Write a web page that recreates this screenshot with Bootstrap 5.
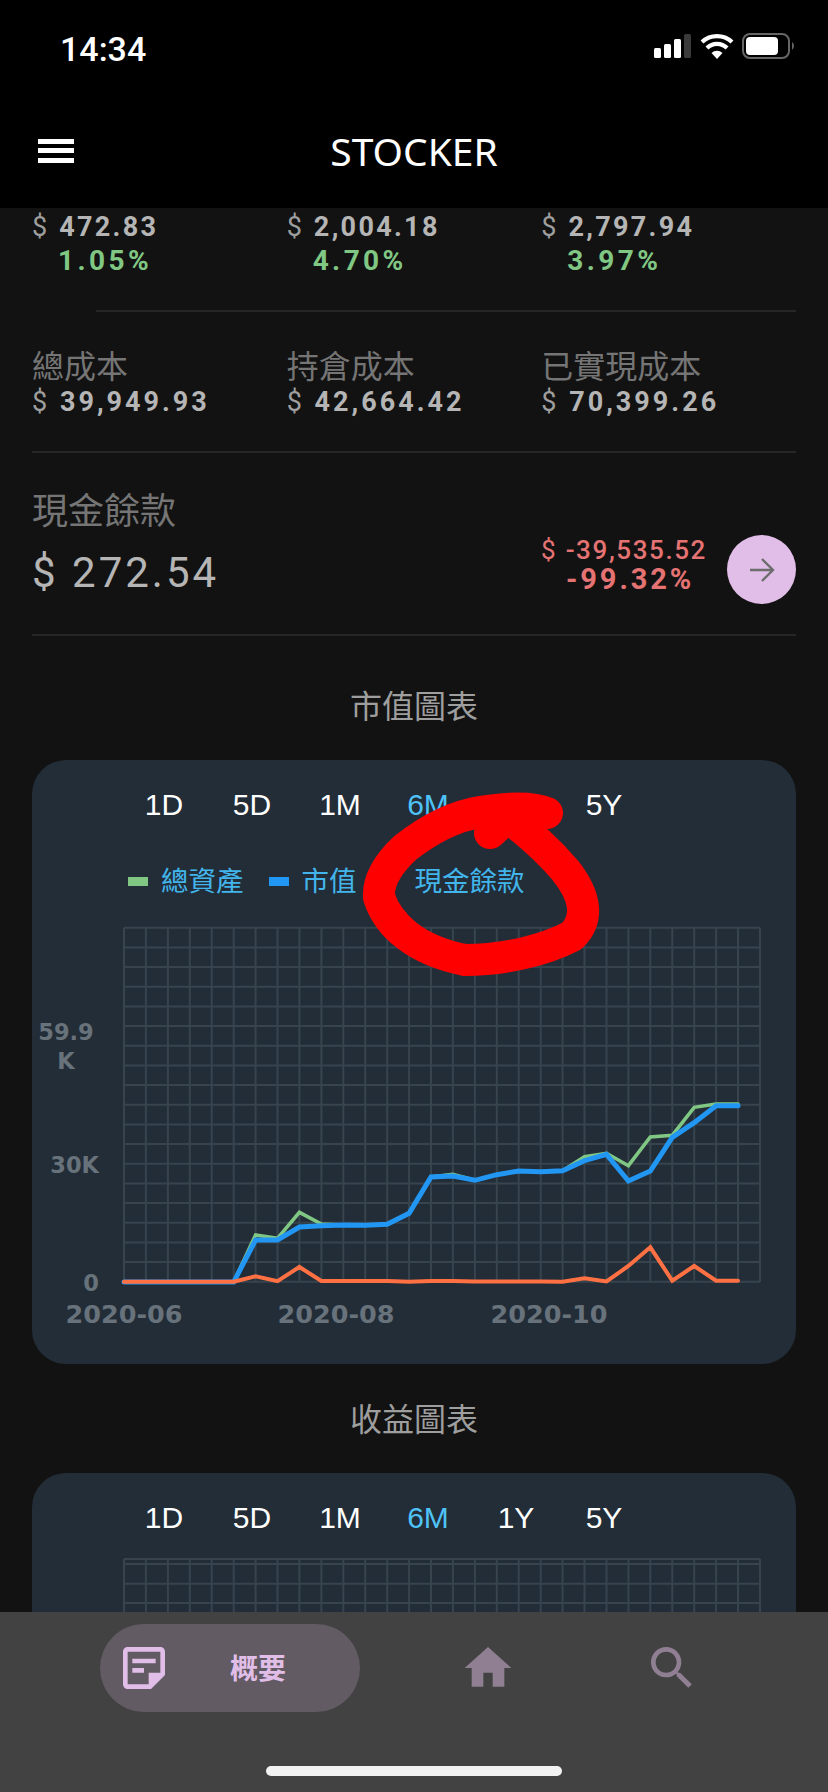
<!DOCTYPE html>
<html lang="zh-Hant">
<head>
  <meta charset="UTF-8">
  <meta name="viewport" content="width=device-width, initial-scale=1.0">
  <title>Stocker</title>
  <link rel="stylesheet" href="https://cdn.jsdelivr.net/npm/bootstrap@5.3.0/dist/css/bootstrap.min.css">
  <style>
    html, body { background: #121212; }
    body { font-family: "Liberation Sans", "Noto Sans CJK TC", sans-serif; }
    .app-frame { width: 828px; height: 1792px; overflow: hidden; }
    .top-bar { height: 208px; background: #000; color: #fff; flex: none; }
    .status-line { height: 98px; padding: 29px 33px 0 60px; }
    .clock { font: 500 34px/40px Roboto, sans-serif; }
    .title-line { height: 110px; padding: 0 0 4px 38px; }
    .burger { width: 36px; height: 24px; flex: none; border-top: 5px solid #fff; border-bottom: 5px solid #fff; position: relative; }
    .burger::after { content: ""; position: absolute; left: 0; right: 0; top: 4px; height: 5px; background: #fff; }
    .app-name { width: 100%; margin-left: -36px; padding-right: 38px; text-align: center; font: 400 39px/50px "Noto Sans", sans-serif; }
    .scroll-area { flex: 1 1 auto; overflow: hidden; padding: 2px 32px 0; background: #121212; min-height: 0; }
    .money { font: 700 27px/34px Roboto, sans-serif; letter-spacing: 3px; color: #b5b5b5; }
    .money .cur { font-weight: 400; margin-right: 3px; color: #9e9e9e; letter-spacing: 0; }
    .money-tight { letter-spacing: 2.3px; }
    .gain { font: 700 28px/34px Roboto, sans-serif; letter-spacing: 3.4px; color: #81c784; padding-left: 26px; }
    .rule { height: 2px; background: #262626; }
    .rule-short { margin: 32px 0 0 64px; }
    .cost-row { padding-top: 37px; padding-bottom: 32px; }
    .label-cjk { font-size: 32px; line-height: 36px; color: #757575; }
    .cash-row { padding-top: 38px; padding-bottom: 30px; }
    .cash-label { font-size: 36px; line-height: 42px; color: #757575; }
    .cash-value { font: 400 42px/50px Roboto, sans-serif; letter-spacing: 3px; color: #b5b5b5; margin-top: 15px; }
    .delta { color: #e57373; font-family: Roboto, sans-serif; padding-top: 44px; width: 164px; }
    .delta-amt { font-size: 26px; line-height: 30px; font-weight: 500; letter-spacing: 1.6px; white-space: nowrap; }
    .delta-amt .cur { font-weight: 400; letter-spacing: 0; margin-right: 2px; }
    .delta-pct { font-size: 29px; line-height: 29px; font-weight: 700; letter-spacing: 2.9px; padding-left: 25px; }
    .go-btn { width: 69px; height: 69px; background: #e1bee7; border: 0; margin: 44px 0 0 22px; flex: none; }
    .go-btn:hover { background: #e1bee7; }
    .chart-head { font-size: 32px; line-height: 40px; color: #9e9e9e; text-align: center; }
    .chart-box { background: #222d38; border-radius: 34px; position: relative; }
    .range-tabs { padding: 23px 0 0 88px; }
    .range-tabs span { width: 88px; text-align: center; font-size: 30px; line-height: 44px; color: #fff; }
    .range-tabs .picked { color: #4fc3f7; }
    .legend-row { padding: 35px 0 0 96px; height: 98px; font-size: 27.5px; line-height: 40px; color: #42b6ec; align-items: flex-start; }
    .legend-row i { display: block; width: 20px; height: 9px; margin: 15px 13px 0 0; }
    .legend-row i.tiny-mark { width: 14px; margin-right: 19px; }
    .legend-row span { margin-right: 25px; white-space: nowrap; }
    .plot { display: block; }
    .plot text { font: 700 22.5px "DejaVu Sans", sans-serif; fill: #68727b; }
    .plot text.tick-x { font-size: 25.5px; }
    .scribble { position: absolute; left: 0; top: 0; pointer-events: none; }
    .bottom-bar { height: 180px; flex: none; background: #424242; position: relative; padding: 12px 0 0 100px; }
    .pill { width: 260px; height: 88px; border-radius: 44px; background: #625b63; padding-left: 16px; color: #e1bee7; }
    .pill b { width: 84px; margin: 4px 0 0 44px; text-align: center; font-size: 28px; font-weight: 700; }
    .nav-spot { width: 56px; height: 56px; margin-top: 16px; }
    .home-spot { margin-left: 100px; }
    .find-spot { margin-left: 128px; }
    .home-line { position: absolute; left: 266px; bottom: 16px; width: 296px; height: 10px; border-radius: 5px; background: #f2f2f2; }
  </style>
</head>
<body>
  <div class="app-frame d-flex flex-column">
    <header class="top-bar">
      <div class="status-line d-flex justify-content-between align-items-start">
        <span class="clock">14:34</span>
        <svg width="141" height="28" viewBox="0 0 141 28" class="mt-1">
          <g fill="#fff">
            <rect x="0" y="15" width="7" height="10" rx="1.5"/>
            <rect x="10" y="11" width="7" height="14" rx="1.5"/>
            <rect x="20" y="6" width="7" height="19" rx="1.5"/>
          </g>
          <rect x="30" y="1" width="7" height="24" rx="1.5" fill="#3a3a3a"/>
          <g fill="none" stroke="#fff" stroke-width="4.2">
            <path d="M48 9a22 22 0 0 1 30 0"/>
            <path d="M53 15a14 14 0 0 1 20 0"/>
          </g>
          <path d="M57.500 20a8 8 0 0 1 11 0l-5.500 6z" fill="#fff"/>
          <rect x="89" y="1" width="46" height="24" rx="7" fill="none" stroke="#666" stroke-width="2"/>
          <rect x="92" y="4" width="32" height="18" rx="4" fill="#fff"/>
          <path d="M138 9a5 5 0 0 1 0 8z" fill="#666"/>
        </svg>
      </div>
      <div class="title-line d-flex align-items-center">
        <div class="burger"></div>
        <div class="app-name">STOCKER</div>
      </div>
    </header>

    <main class="scroll-area">
      <div class="row g-0">
        <div class="col-4"><div class="money money-tight"><span class="cur">$</span> 472.83</div><div class="gain">1.05%</div></div>
        <div class="col-4"><div class="money money-tight"><span class="cur">$</span> 2,004.18</div><div class="gain">4.70%</div></div>
        <div class="col-4"><div class="money money-tight"><span class="cur">$</span> 2,797.94</div><div class="gain">3.97%</div></div>
      </div>
      <div class="rule rule-short"></div>

      <div class="row g-0 cost-row">
        <div class="col-4"><div class="label-cjk">總成本</div><div class="money"><span class="cur">$</span> 39,949.93</div></div>
        <div class="col-4"><div class="label-cjk">持倉成本</div><div class="money"><span class="cur">$</span> 42,664.42</div></div>
        <div class="col-4"><div class="label-cjk">已實現成本</div><div class="money"><span class="cur">$</span> 70,399.26</div></div>
      </div>
      <div class="rule"></div>

      <div class="d-flex cash-row">
        <div class="flex-grow-1">
          <div class="cash-label">現金餘款</div>
          <div class="cash-value">$ 272.54</div>
        </div>
        <div class="delta">
          <div class="delta-amt"><span class="cur">$</span> -39,535.52</div>
          <div class="delta-pct">-99.32%</div>
        </div>
        <button class="btn go-btn rounded-circle d-flex align-items-center justify-content-center p-0" type="button" aria-label="more">
          <svg width="28" height="28" viewBox="0 0 28 28" fill="none" stroke="#6d6d6d" stroke-width="2.4"><path d="M2 14h23M14 3l11 11-11 11"/></svg>
        </button>
      </div>
      <div class="rule"></div>

      <h2 class="chart-head fw-normal mb-0" style="margin-top:51px">市值圖表</h2>
      <section class="chart-box" style="height:604px;margin-top:33px">
        <div class="range-tabs d-flex">
          <span>1D</span><span>5D</span><span>1M</span><span class="picked">6M</span><span>1Y</span><span>5Y</span>
        </div>
        <div class="legend-row d-flex">
          <i style="background:#81c784"></i><span>總資產</span>
          <i style="background:#2196f3"></i><span>市值</span>
          <i class="tiny-mark" style="background:#ff7043"></i><span>現金餘款</span>
        </div>
        <svg id="plotA" class="plot" width="764" height="430" viewBox="32 925 764 430"></svg>
        <svg class="scribble" width="764" height="604" viewBox="32 760 764 604" fill="none" stroke="#f00" stroke-width="32" stroke-linecap="round" stroke-linejoin="round">
          <path d="M547 813C530 806 505 808 480 812C455 816 428 830 405 848C388 864 378 880 379 897C388 925 415 950 465 960C505 960 545 950 572 936C590 918 585 895 565 870C548 850 525 830 505 815"/>
          <path d="M490 833L510 815"/>
        </svg>
      </section>

      <h2 class="chart-head fw-normal mb-0" style="margin-top:36px">收益圖表</h2>
      <section class="chart-box" style="height:500px;margin-top:33px">
        <div class="range-tabs d-flex">
          <span>1D</span><span>5D</span><span>1M</span><span class="picked">6M</span><span>1Y</span><span>5Y</span>
        </div>
        <svg id="plotB" class="plot mt-3" width="764" height="60" viewBox="32 1558 764 60"></svg>
      </section>
    </main>

    <nav class="bottom-bar d-flex align-items-start">
      <div class="pill d-flex align-items-center">
        <svg width="56" height="56" viewBox="0 0 24 24" fill="#e1bee7"><path fill-rule="evenodd" d="M19 3H5a2 2 0 0 0-2 2v14a2 2 0 0 0 2 2h10l6-6V5a2 2 0 0 0-2-2zM5 5h14v9h-5v5H5z"/><path d="M7 8h10v2H7zM7 12h5v2H7z"/></svg>
        <b>概要</b>
      </div>
      <svg class="nav-spot home-spot" viewBox="0 0 24 24" fill="#907f92"><path d="M10 20v-6h4v6h5v-8h3L12 3 2 12h3v8z"/></svg>
      <svg class="nav-spot find-spot" viewBox="0 0 24 24" fill="#907f92"><path d="M15.500 14h-.79l-.28-.27C15.410 12.590 16 11.110 16 9.500 16 5.910 13.090 3 9.500 3S3 5.910 3 9.500 5.910 16 9.500 16c1.610 0 3.090-.59 4.230-1.570l.27.28v.79l5 4.990L20.490 19l-4.990-5zm-6 0C7.010 14 5 11.990 5 9.500S7.010 5 9.500 5 14 7.010 14 9.500 11.990 14 9.500 14z"/></svg>
      <div class="home-line"></div>
    </nav>
  </div>

  <script src="https://cdn.jsdelivr.net/npm/bootstrap@5.3.0/dist/js/bootstrap.bundle.min.js"></script>
  <script>
    // chart values are pixel heights read off the picture, one per grid column
    const left = 124, step = 21.93;
    const blue = [1282,1282,1282,1282,1282,1282,1240,1240,1227,1225.7,1225,1225.3,1224.3,1213.3,1177,1176,1180.3,1174.7,1171,1171.7,1170.7,1160.7,1154.3,1181,1171,1137.3,1122.7,1105.7,1105.7];
    const green = [1282,1282,1282,1282,1282,1282,1235,1238.3,1212.3,1224,1225,1225.3,1224.3,1213.3,1177,1174.3,1180.3,1174.7,1171,1171.7,1170.7,1156.7,1153.3,1165.7,1137,1135.3,1107.3,1104,1104];
    const orange = [1281.7,1281.7,1281.7,1281.7,1281.7,1281.7,1276.3,1281.2,1267,1281,1281,1281,1281,1281.7,1281,1281,1281.5,1281.5,1281.5,1281.5,1281.7,1278.3,1281.5,1266,1247.3,1280.7,1266,1280.7,1280.7];

    function gridLines(rows, top, bottom) {
      let out = '';
      for (let k = 0; k <= 29; k++) {
        const x = (left + k * step).toFixed(1);
        out += `<line x1="${x}" x2="${x}" y1="${top}" y2="${bottom}"/>`;
      }
      rows.forEach(y => { out += `<line x1="${left}" x2="760" y1="${y}" y2="${y}"/>`; });
      return `<g stroke="#37444e" stroke-width="2">${out}</g>`;
    }

    function series(values, color, width) {
      const pts = values.map((y, k) => `${(left + k * step).toFixed(1)},${y}`).join(' ');
      return `<polyline points="${pts}" fill="none" stroke="${color}" stroke-width="${width}" stroke-linecap="round"/>`;
    }

    const rowsA = [];
    for (let i = 0; i <= 18; i++) rowsA.push((927.7 + i * 19.67).toFixed(1));
    document.getElementById('plotA').innerHTML =
      gridLines(rowsA, 927.7, 1281.7) +
      series(green, '#81c784', 3.6) + series(blue, '#2196f3', 5) + series(orange, '#ff7043', 4) +
      `<text x="66" y="1040" text-anchor="middle">59.9</text>
       <text x="66" y="1069" text-anchor="middle">K</text>
       <text x="99" y="1173" text-anchor="end">30K</text>
       <text x="99" y="1291" text-anchor="end">0</text>
       <text class="tick-x" x="124" y="1323" text-anchor="middle">2020-06</text>
       <text class="tick-x" x="336" y="1323" text-anchor="middle">2020-08</text>
       <text class="tick-x" x="549" y="1323" text-anchor="middle">2020-10</text>`;
    document.getElementById('plotB').innerHTML = gridLines([1561, 1566, 1585.7, 1605], 1561, 1640);
  </script>
</body>
</html>
